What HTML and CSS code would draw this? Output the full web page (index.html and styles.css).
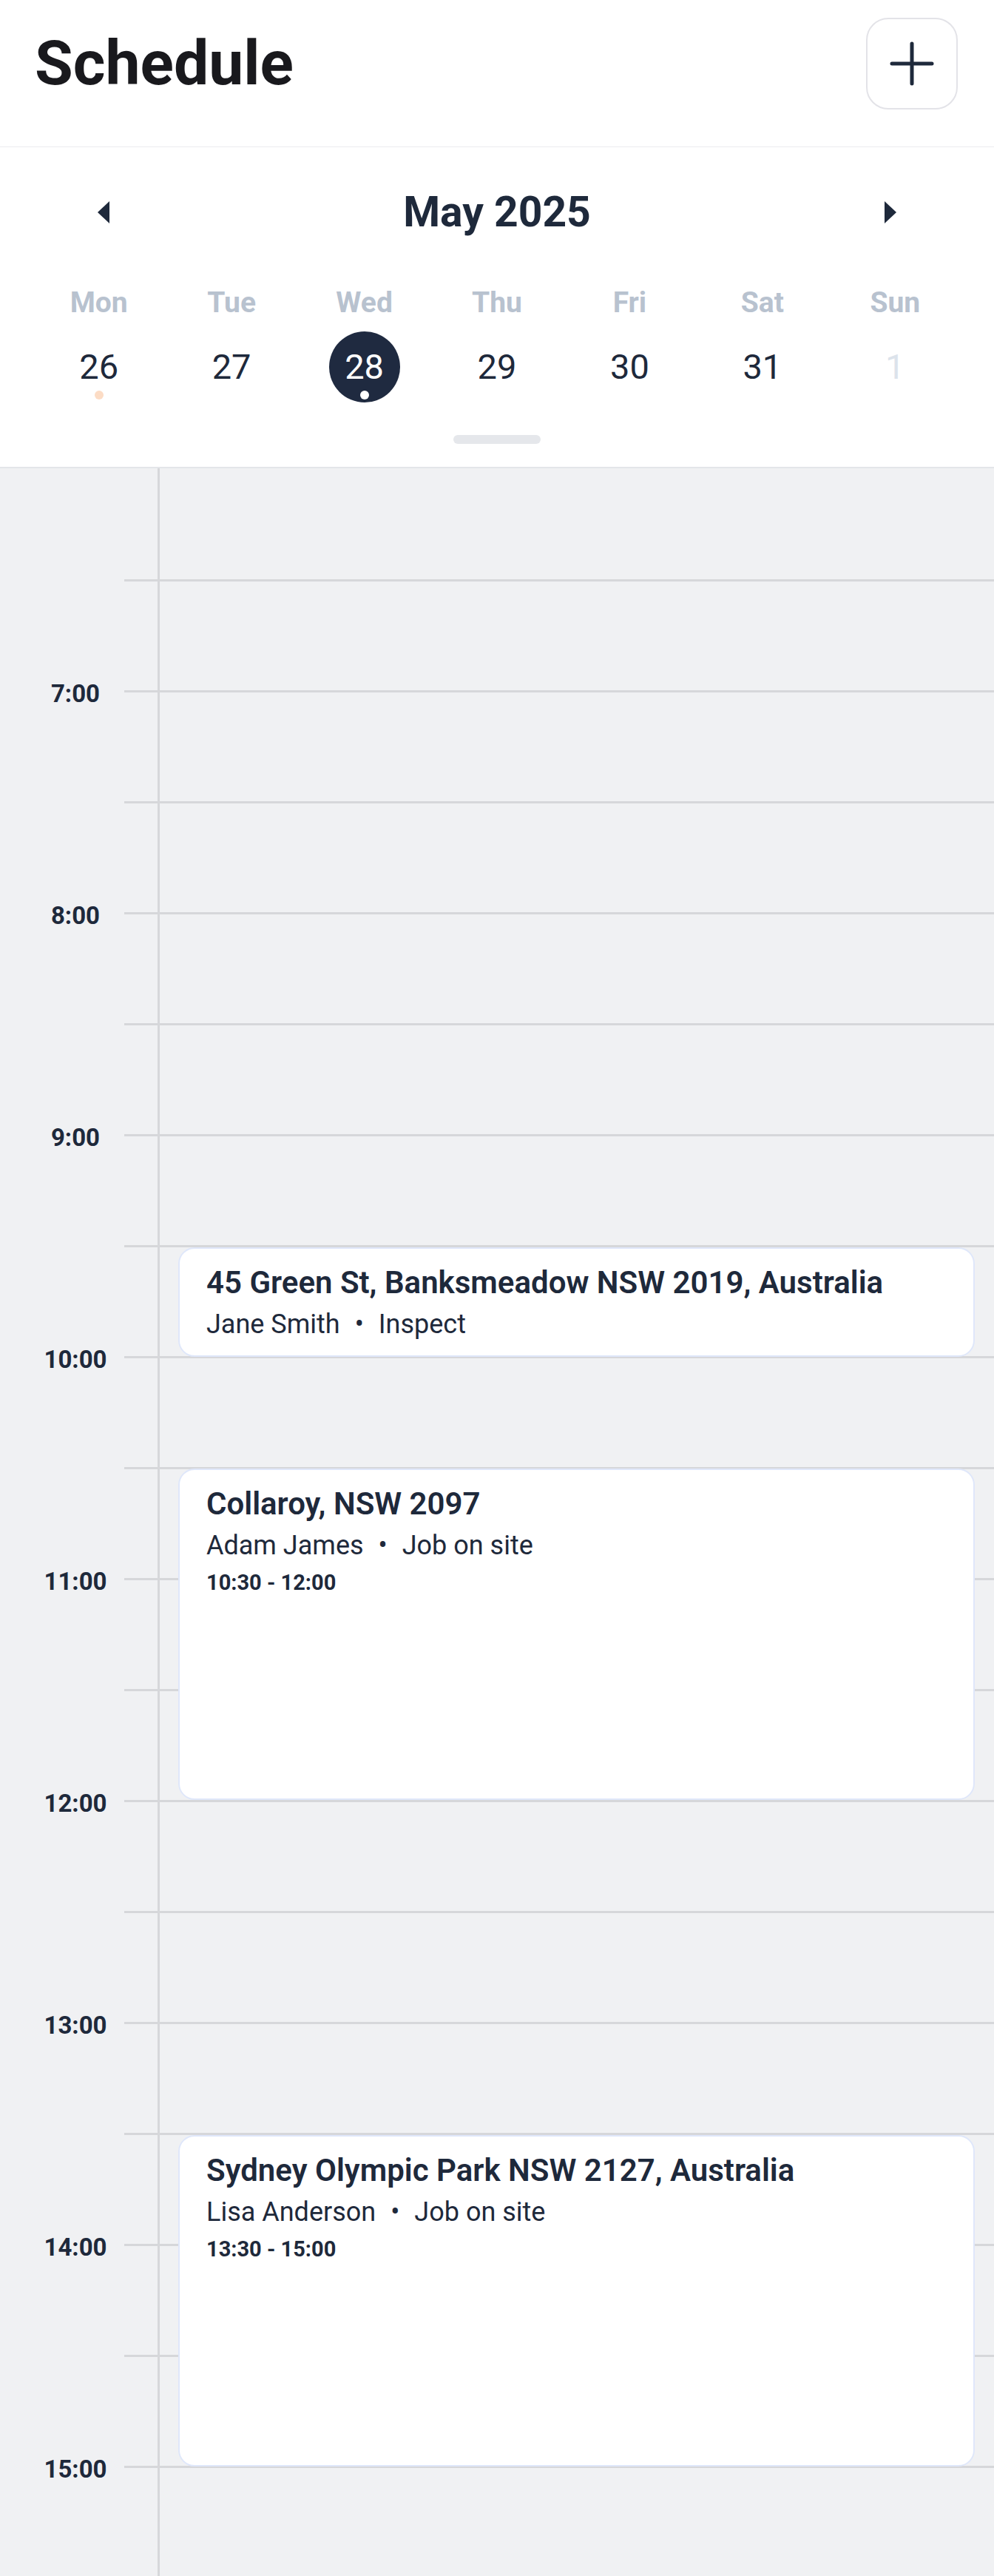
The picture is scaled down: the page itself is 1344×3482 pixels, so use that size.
FILE: index.html
```html
<!DOCTYPE html>
<html lang="en">
<head>
<meta charset="utf-8">
<title>Schedule</title>
<link rel="stylesheet" href="styles.css">
</head>
<body>
<div class="app">
  <header class="topbar">
    <h1 class="title">Schedule</h1>
    <button class="add-btn" aria-label="Add">
      <svg viewBox="0 0 60 60" width="60" height="60"><path d="M30 3v54M3 30h54" stroke="#1e293b" stroke-width="5" stroke-linecap="round" fill="none"/></svg>
    </button>
  </header>

  <section class="calendar">
    <div class="month-row">
      <button class="nav" aria-label="Previous month"><svg viewBox="0 0 16 30" width="16" height="30"><path d="M16 0V30L0 15Z" fill="#1e293b"/></svg></button>
      <h2 class="month">May 2025</h2>
      <button class="nav" aria-label="Next month"><svg viewBox="0 0 16 30" width="16" height="30"><path d="M0 0V30L16 15Z" fill="#1e293b"/></svg></button>
    </div>
    <div class="week">
      <div class="day"><span class="dname">Mon</span><span class="dnum">26<i class="dot peach"></i></span></div>
      <div class="day"><span class="dname">Tue</span><span class="dnum">27</span></div>
      <div class="day"><span class="dname">Wed</span><span class="dnum selected">28<i class="dot white"></i></span></div>
      <div class="day"><span class="dname">Thu</span><span class="dnum">29</span></div>
      <div class="day"><span class="dname">Fri</span><span class="dnum">30</span></div>
      <div class="day"><span class="dname">Sat</span><span class="dnum">31</span></div>
      <div class="day"><span class="dname">Sun</span><span class="dnum muted">1</span></div>
    </div>
    <div class="handle"></div>
  </section>

  <section class="timeline">
    <div class="slot"><span class="lbl"></span><span class="gutter"></span><span class="main"></span></div>
    <div class="slot"><span class="lbl"></span><span class="gutter"></span><span class="main"></span></div>
    <div class="slot"><span class="lbl">7:00</span><span class="gutter"></span><span class="main"></span></div>
    <div class="slot"><span class="lbl"></span><span class="gutter"></span><span class="main"></span></div>
    <div class="slot"><span class="lbl">8:00</span><span class="gutter"></span><span class="main"></span></div>
    <div class="slot"><span class="lbl"></span><span class="gutter"></span><span class="main"></span></div>
    <div class="slot"><span class="lbl">9:00</span><span class="gutter"></span><span class="main"></span></div>
    <div class="slot"><span class="lbl"></span><span class="gutter"></span><span class="main"></span></div>
    <div class="slot"><span class="lbl">10:00</span><span class="gutter"></span><span class="main"></span></div>
    <div class="slot"><span class="lbl"></span><span class="gutter"></span><span class="main"></span></div>
    <div class="slot"><span class="lbl">11:00</span><span class="gutter"></span><span class="main"></span></div>
    <div class="slot"><span class="lbl"></span><span class="gutter"></span><span class="main"></span></div>
    <div class="slot"><span class="lbl">12:00</span><span class="gutter"></span><span class="main"></span></div>
    <div class="slot"><span class="lbl"></span><span class="gutter"></span><span class="main"></span></div>
    <div class="slot"><span class="lbl">13:00</span><span class="gutter"></span><span class="main"></span></div>
    <div class="slot"><span class="lbl"></span><span class="gutter"></span><span class="main"></span></div>
    <div class="slot"><span class="lbl">14:00</span><span class="gutter"></span><span class="main"></span></div>
    <div class="slot"><span class="lbl"></span><span class="gutter"></span><span class="main"></span></div>
    <div class="slot"><span class="lbl">15:00</span><span class="gutter"></span><span class="main"></span></div>

    <div class="events">
      <article class="event" style="top:1053px;height:148px">
        <h3 class="ev-title">45 Green St, Banksmeadow NSW 2019, Australia</h3>
        <p class="ev-sub">Jane Smith<span class="sep">•</span>Inspect</p>
      </article>
      <article class="event" style="top:1352px;height:448px">
        <h3 class="ev-title">Collaroy, NSW 2097</h3>
        <p class="ev-sub">Adam James<span class="sep">•</span>Job on site</p>
        <p class="ev-time">10:30 - 12:00</p>
      </article>
      <article class="event" style="top:2253px;height:448px">
        <h3 class="ev-title">Sydney Olympic Park NSW 2127, Australia</h3>
        <p class="ev-sub">Lisa Anderson<span class="sep">•</span>Job on site</p>
        <p class="ev-time">13:30 - 15:00</p>
      </article>
    </div>
  </section>
</div>
</body>
</html>
```

FILE: styles.css
```css
* { box-sizing: border-box; }

html, body {
  margin: 0;
  padding: 0;
  background: #ffffff;
}

body {
  font-family: Roboto, "Liberation Sans", "DejaVu Sans", sans-serif;
  color: #1e293b;
  overflow: hidden;
}

.app {
  width: 1344px;
  height: 3482px;
  overflow: hidden;
}

button {
  font: inherit;
  background: none;
  border: 0;
  padding: 0;
  cursor: pointer;
}

/* Header */
.topbar {
  height: 199px;
  display: flex;
  align-items: center;
  justify-content: space-between;
  padding: 0 49px 26px 47px;
  border-bottom: 1px solid #ececef;
  background: #ffffff;
}

.title {
  margin: 0;
  font-size: 84px;
  line-height: 100px;
  font-weight: 700;
  color: #19191d;
}

.add-btn {
  width: 124px;
  height: 124px;
  border: 2px solid #e3e3e8;
  border-radius: 30px;
  display: flex;
  align-items: center;
  justify-content: center;
  background: #ffffff;
}

/* Calendar */
.calendar {
  padding: 48px 44px 31px;
  border-bottom: 2px solid #e3e5e9;
  background: #ffffff;
}

.month-row {
  height: 80px;
  display: flex;
  align-items: center;
  justify-content: space-between;
  padding: 0 72px;
}

.nav {
  width: 48px;
  height: 48px;
  display: flex;
  align-items: center;
  justify-content: center;
}

.month {
  margin: 0;
  font-size: 57px;
  line-height: 80px;
  font-weight: 700;
  color: #1e293b;
}

.week {
  margin-top: 58px;
  display: grid;
  grid-template-columns: repeat(7, 1fr);
}

.day {
  display: flex;
  flex-direction: column;
  align-items: center;
}

.dname {
  font-size: 39px;
  line-height: 48px;
  font-weight: 700;
  color: #b8c2cf;
}

.dnum {
  position: relative;
  margin-top: 15px;
  width: 96px;
  height: 96px;
  border-radius: 50%;
  display: flex;
  align-items: center;
  justify-content: center;
  font-size: 47px;
  line-height: 96px;
  font-weight: 400;
  color: #1e293b;
}

.dnum.selected {
  background: #1f2a40;
  color: #ffffff;
}

.dnum.muted {
  color: #dce3eb;
}

.dot {
  position: absolute;
  left: 50%;
  bottom: 4px;
  width: 12px;
  height: 12px;
  margin-left: -6px;
  border-radius: 50%;
}

.dot.peach { background: #fcdcc5; }
.dot.white { background: #ffffff; }

.handle {
  margin: 44px auto 0;
  width: 118px;
  height: 12px;
  border-radius: 6px;
  background: #e5e7eb;
}

/* Timeline */
.timeline {
  position: relative;
  background: #f0f1f3;
}

.slot {
  display: grid;
  grid-template-columns: 168px 45px 1fr;
  height: 150px;
}

.lbl {
  margin-top: -15px;
  padding-left: 36px;
  height: 40px;
  text-align: center;
  font-size: 33px;
  line-height: 40px;
  font-weight: 700;
  color: #1e293b;
}

.gutter {
  border-top: 3px solid #d6d7da;
}

.main {
  border-top: 3px solid #d6d7da;
  border-left: 3px solid #d6d7da;
}

.slot:first-child .gutter,
.slot:first-child .main {
  border-top: 0;
}

.events {
  position: absolute;
  top: 0;
  bottom: 0;
  left: 216px;
  right: 0;
}

.event {
  position: absolute;
  left: 25px;
  right: 26px;
  background: #ffffff;
  border: 2px solid #dfe7fa;
  border-radius: 22px;
  padding: 20px 36px;
  overflow: hidden;
}

.ev-title {
  margin: 0;
  font-size: 42px;
  line-height: 52px;
  font-weight: 600;
  color: #1e293b;
  white-space: nowrap;
}

.ev-sub {
  margin: 8px 0 0;
  font-size: 36px;
  line-height: 44px;
  font-weight: 400;
  color: #1e293b;
  white-space: nowrap;
}

.sep {
  margin: 0 20px;
}

.ev-time {
  margin: 10px 0 0;
  font-size: 29px;
  line-height: 36px;
  font-weight: 700;
  color: #1e293b;
}
```
